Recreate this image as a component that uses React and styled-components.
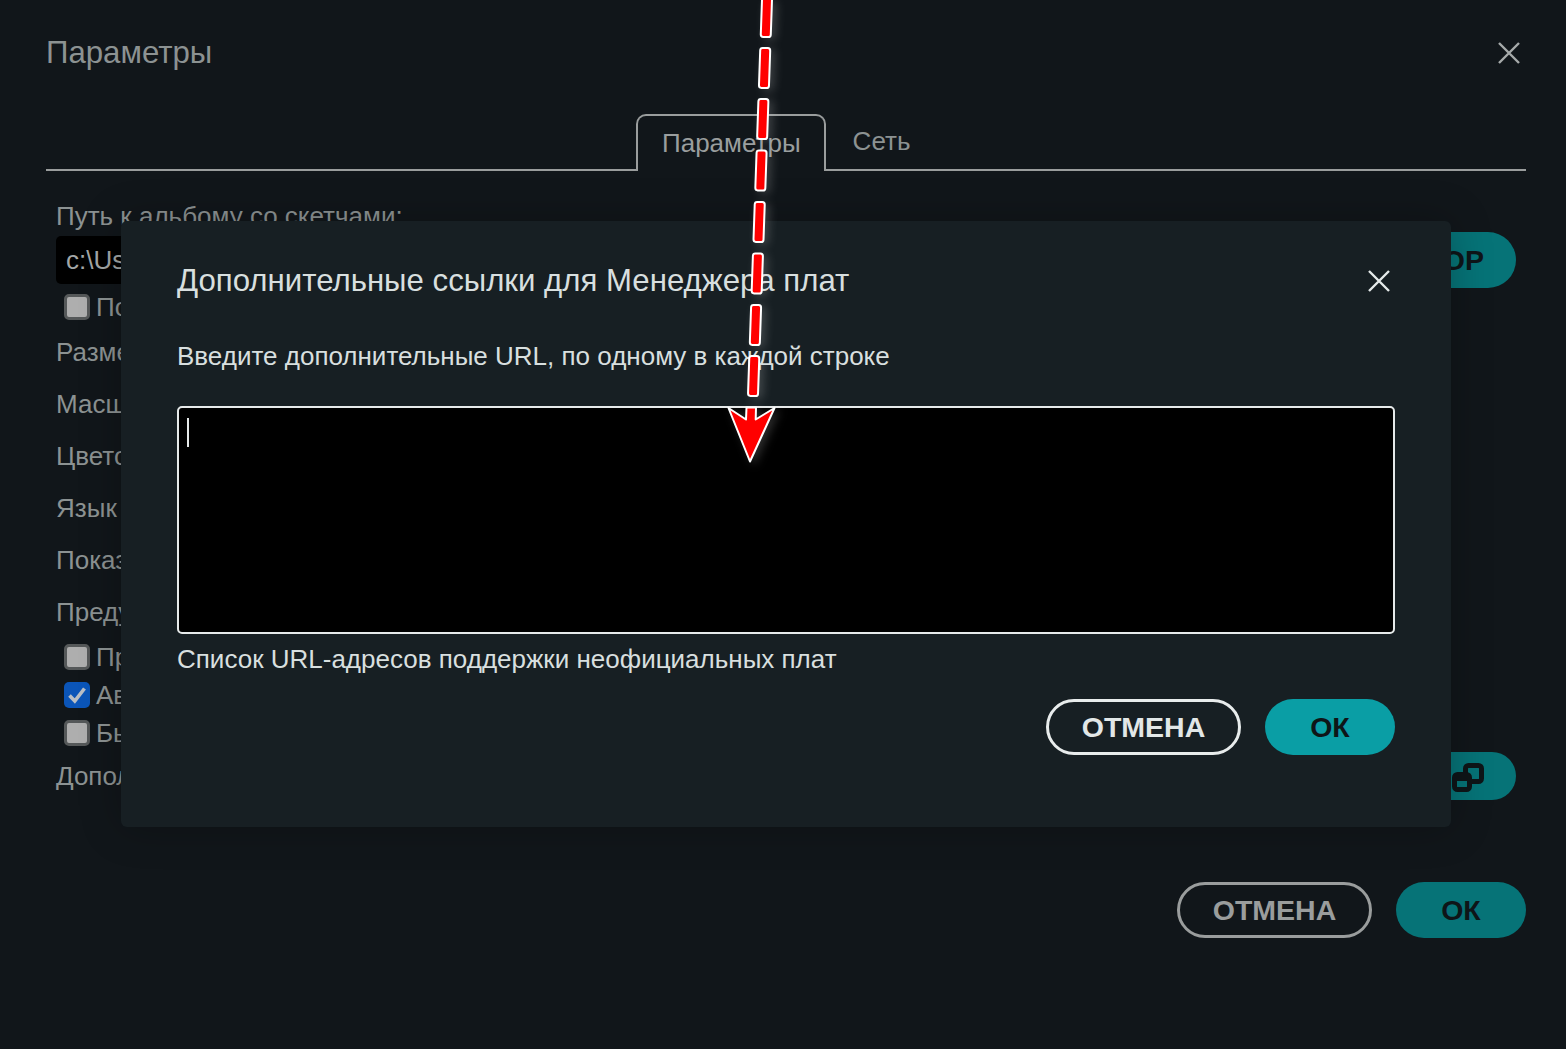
import styled, { createGlobalStyle } from "styled-components";

const GlobalStyle = createGlobalStyle`
    html, body {
        margin: 0;
        padding: 0;
        background: #11161a;
    }
    * {
        box-sizing: border-box;
    }
`;

const Page = styled.div`
    position: relative;
    width: 1566px;
    height: 1049px;
    overflow: hidden;
    padding: 0 40px 0 46px;
    background: #11161a;
    color: #8c9292;
    font-family: "Liberation Sans", Arial, sans-serif;
    font-size: 26px;
`;

const Header = styled.div`
    height: 114px;
    padding-top: 33px;
    display: flex;
    justify-content: space-between;
    align-items: flex-start;
`;

const PageTitle = styled.div`
    font-size: 31.2px;
    line-height: 40px;
`;

const CloseIcon = styled.svg`
    display: block;
    width: 24px;
    height: 24px;
    margin: ${(p) => p.$margin || 0};
    stroke: ${(p) => p.$color};
    stroke-width: 2.4;
    fill: none;
`;

const Tabs = styled.div`
    height: 57px;
    display: flex;
    padding-left: 590px;
    border-bottom: 2px solid #9a9d9d;
`;

const Tab = styled.div`
    height: 57px;
    padding: 0 ${(p) => (p.$active ? "23px 0 24px" : "27px")};
    line-height: 55px;
    color: ${(p) => (p.$active ? "#9a9e9e" : "#8c9292")};
    background: ${(p) => (p.$active ? "#11161a" : "transparent")};
    border: ${(p) => (p.$active ? "2px solid #9a9d9d" : "none")};
    border-bottom: none;
    border-radius: 10px 10px 0 0;
`;

const Form = styled.div`
    padding: 25px 10px 0;
`;

const Label = styled.div`
    height: ${(p) => p.$height || 52}px;
    line-height: ${(p) => p.$height || 52}px;
    white-space: nowrap;
`;

const ExtraLabel = styled(Label)`
    flex: 1;
`;

const ControlRow = styled.div`
    display: flex;
    align-items: center;
    gap: 24px;
    height: ${(p) => p.$height}px;
    margin-top: ${(p) => p.$offset || 0}px;
`;

const PathInput = styled.div`
    flex: 1;
    height: 48px;
    padding-left: 10px;
    line-height: 48px;
    color: #a3a7a7;
    background: #000;
    border-radius: 5px;
`;

const CheckRow = styled.div`
    display: flex;
    align-items: center;
    height: 38px;
    padding-left: 8px;
    gap: 6px;
    white-space: nowrap;
`;

const CheckBox = styled.span`
    display: flex;
    align-items: center;
    justify-content: center;
    width: 26px;
    height: 26px;
    border-radius: 5px;
    background: ${(p) => (p.$checked ? "#0b55b8" : "#aeaeae")};
    border: ${(p) => (p.$checked ? "none" : "3px solid #555859")};
`;

const TealButton = styled.button`
    display: flex;
    align-items: center;
    justify-content: center;
    height: ${(p) => p.$height || 56}px;
    width: ${(p) => p.$width}px;
    padding: ${(p) => (p.$width ? 0 : "0 32px")};
    flex-shrink: 0;
    border: none;
    border-radius: 28px;
    background: ${(p) => (p.$bright ? "#0a9ea5" : "#067377")};
    color: #0e1518;
    font: bold 28.5px "Liberation Sans", Arial, sans-serif;
`;

const OutlineButton = styled.button`
    width: 195px;
    height: 56px;
    border: 3px solid ${(p) => (p.$bright ? "#e8ecec" : "#9a9d9d")};
    border-radius: 28px;
    background: transparent;
    color: ${(p) => (p.$bright ? "#e2e7e7" : "#9a9d9d")};
    font: bold 28.5px "Liberation Sans", Arial, sans-serif;
`;

const Footer = styled.div`
    display: flex;
    justify-content: flex-end;
    gap: 24px;
    margin-top: ${(p) => p.$top}px;
`;

const Dialog = styled.div`
    position: absolute;
    left: 121px;
    top: 221px;
    width: 1330px;
    height: 606px;
    padding: 0 56px;
    background: #171f23;
    border-radius: 6px;
    color: #d8dfdf;
    box-shadow: 0 0 40px rgba(0, 0, 0, 0.25);
`;

const DialogHeader = styled.div`
    height: 115px;
    padding-top: 40px;
    display: flex;
    justify-content: space-between;
    align-items: flex-start;
`;

const DialogTitle = styled.div`
    font-size: 31.2px;
    line-height: 40px;
`;

const Hint = styled.div`
    line-height: 40px;
`;

const TextBox = styled.div`
    height: 228px;
    margin-top: 30px;
    padding: 10px 8px;
    background: #000;
    border: 2px solid #e6eaea;
    border-radius: 5px;
`;

const Caret = styled.div`
    width: 2px;
    height: 29px;
    background: #e6eaea;
`;

const HelpText = styled.div`
    margin-top: 5px;
    line-height: 40px;
`;

const ArrowLayer = styled.svg`
    position: absolute;
    left: 0;
    top: 0;
    width: 1566px;
    height: 1049px;
    pointer-events: none;
    filter: drop-shadow(4px 2px 5px rgba(210, 210, 210, 0.22));
`;

const dashTops = [-13, 48, 99, 150.5, 202, 253.5, 305, 356];

function Cross({ color, margin }) {
    return (
        <CloseIcon viewBox="0 0 24 24" $color={color} $margin={margin}>
            <path d="M2 2 22 22M22 2 2 22" />
        </CloseIcon>
    );
}

function Check({ checked, children }) {
    return (
        <CheckRow>
            <CheckBox $checked={checked}>
                {checked && (
                    <svg width="20" height="20" viewBox="0 0 20 20" fill="none" stroke="#b9bec4" strokeWidth="3.6">
                        <path d="M2.5 10.5 7.8 16 17.5 3.5" />
                    </svg>
                )}
            </CheckBox>
            {children}
        </CheckRow>
    );
}

function WindowsIcon() {
    return (
        <svg width="32" height="32" viewBox="0 0 32 32" fill="none" stroke="#0e1518" strokeWidth="5">
            <rect x="13.5" y="5.5" width="16" height="16" rx="3" />
            <rect x="2.5" y="14.5" width="15" height="15" rx="3" fill="#067377" />
            <path d="M3 18H17" strokeWidth="6" />
        </svg>
    );
}

function Arrow() {
    return (
        <ArrowLayer viewBox="0 0 1566 1049">
            {dashTops.map((top, index) => {
                const height = index === 0 ? 50 : 40;
                const cy = top + height / 2;
                const cx = 767 - cy * 0.0355;
                return (
                    <rect
                        key={index}
                        x={cx - 5}
                        y={top}
                        width="10"
                        height={height}
                        rx="2.5"
                        fill="#ff0000"
                        stroke="#fff"
                        strokeWidth="2"
                        transform={`rotate(2 ${cx} ${cy})`}
                    />
                );
            })}
            <path
                d="M746.5 407.5H756L755.7 419.5 774.5 408 750 461.5 728.5 408 746 419.5Z"
                fill="#ff0000"
                stroke="#fff"
                strokeWidth="2"
                strokeLinejoin="round"
            />
        </ArrowLayer>
    );
}

function App() {
    return (
        <Page>
            <GlobalStyle />
            <Header>
                <PageTitle>Параметры</PageTitle>
                <Cross color="#a6aaaa" margin="8px 5px 0 0" />
            </Header>
            <Tabs>
                <Tab $active>Параметры</Tab>
                <Tab>Сеть</Tab>
            </Tabs>
            <Form>
                <Label $height={40}>Путь к альбому со скетчами:</Label>
                <ControlRow $height={56} $offset={-4}>
                    <PathInput>c:\Users\User\Documents\Arduino</PathInput>
                    <TealButton>ОБЗОР</TealButton>
                </ControlRow>
                <Check>Показывать файлы</Check>
                <Label>Размер шрифта</Label>
                <Label>Масштаб</Label>
                <Label>Цветовая тема</Label>
                <Label>Язык</Label>
                <Label>Показать подробный вывод</Label>
                <Label>Предупреждения</Label>
                <Check>Проверять код</Check>
                <Check checked>Автосохранение</Check>
                <Check>Быстрая компиляция</Check>
                <ControlRow $height={48}>
                    <ExtraLabel $height={48}>Дополнительные ссылки</ExtraLabel>
                    <TealButton $height={48}>
                        <WindowsIcon />
                    </TealButton>
                </ControlRow>
            </Form>
            <Footer $top={82}>
                <OutlineButton>ОТМЕНА</OutlineButton>
                <TealButton $width={130}>ОК</TealButton>
            </Footer>
            <Dialog>
                <DialogHeader>
                    <DialogTitle>Дополнительные ссылки для Менеджера плат</DialogTitle>
                    <Cross color="#e6eaea" margin="8px 4px 0 0" />
                </DialogHeader>
                <Hint>Введите дополнительные URL, по одному в каждой строке</Hint>
                <TextBox>
                    <Caret />
                </TextBox>
                <HelpText>Список URL-адресов поддержки неофициальных плат</HelpText>
                <Footer $top={20}>
                    <OutlineButton $bright>ОТМЕНА</OutlineButton>
                    <TealButton $width={130} $bright>ОК</TealButton>
                </Footer>
            </Dialog>
            <Arrow />
        </Page>
    );
}

export default App;
